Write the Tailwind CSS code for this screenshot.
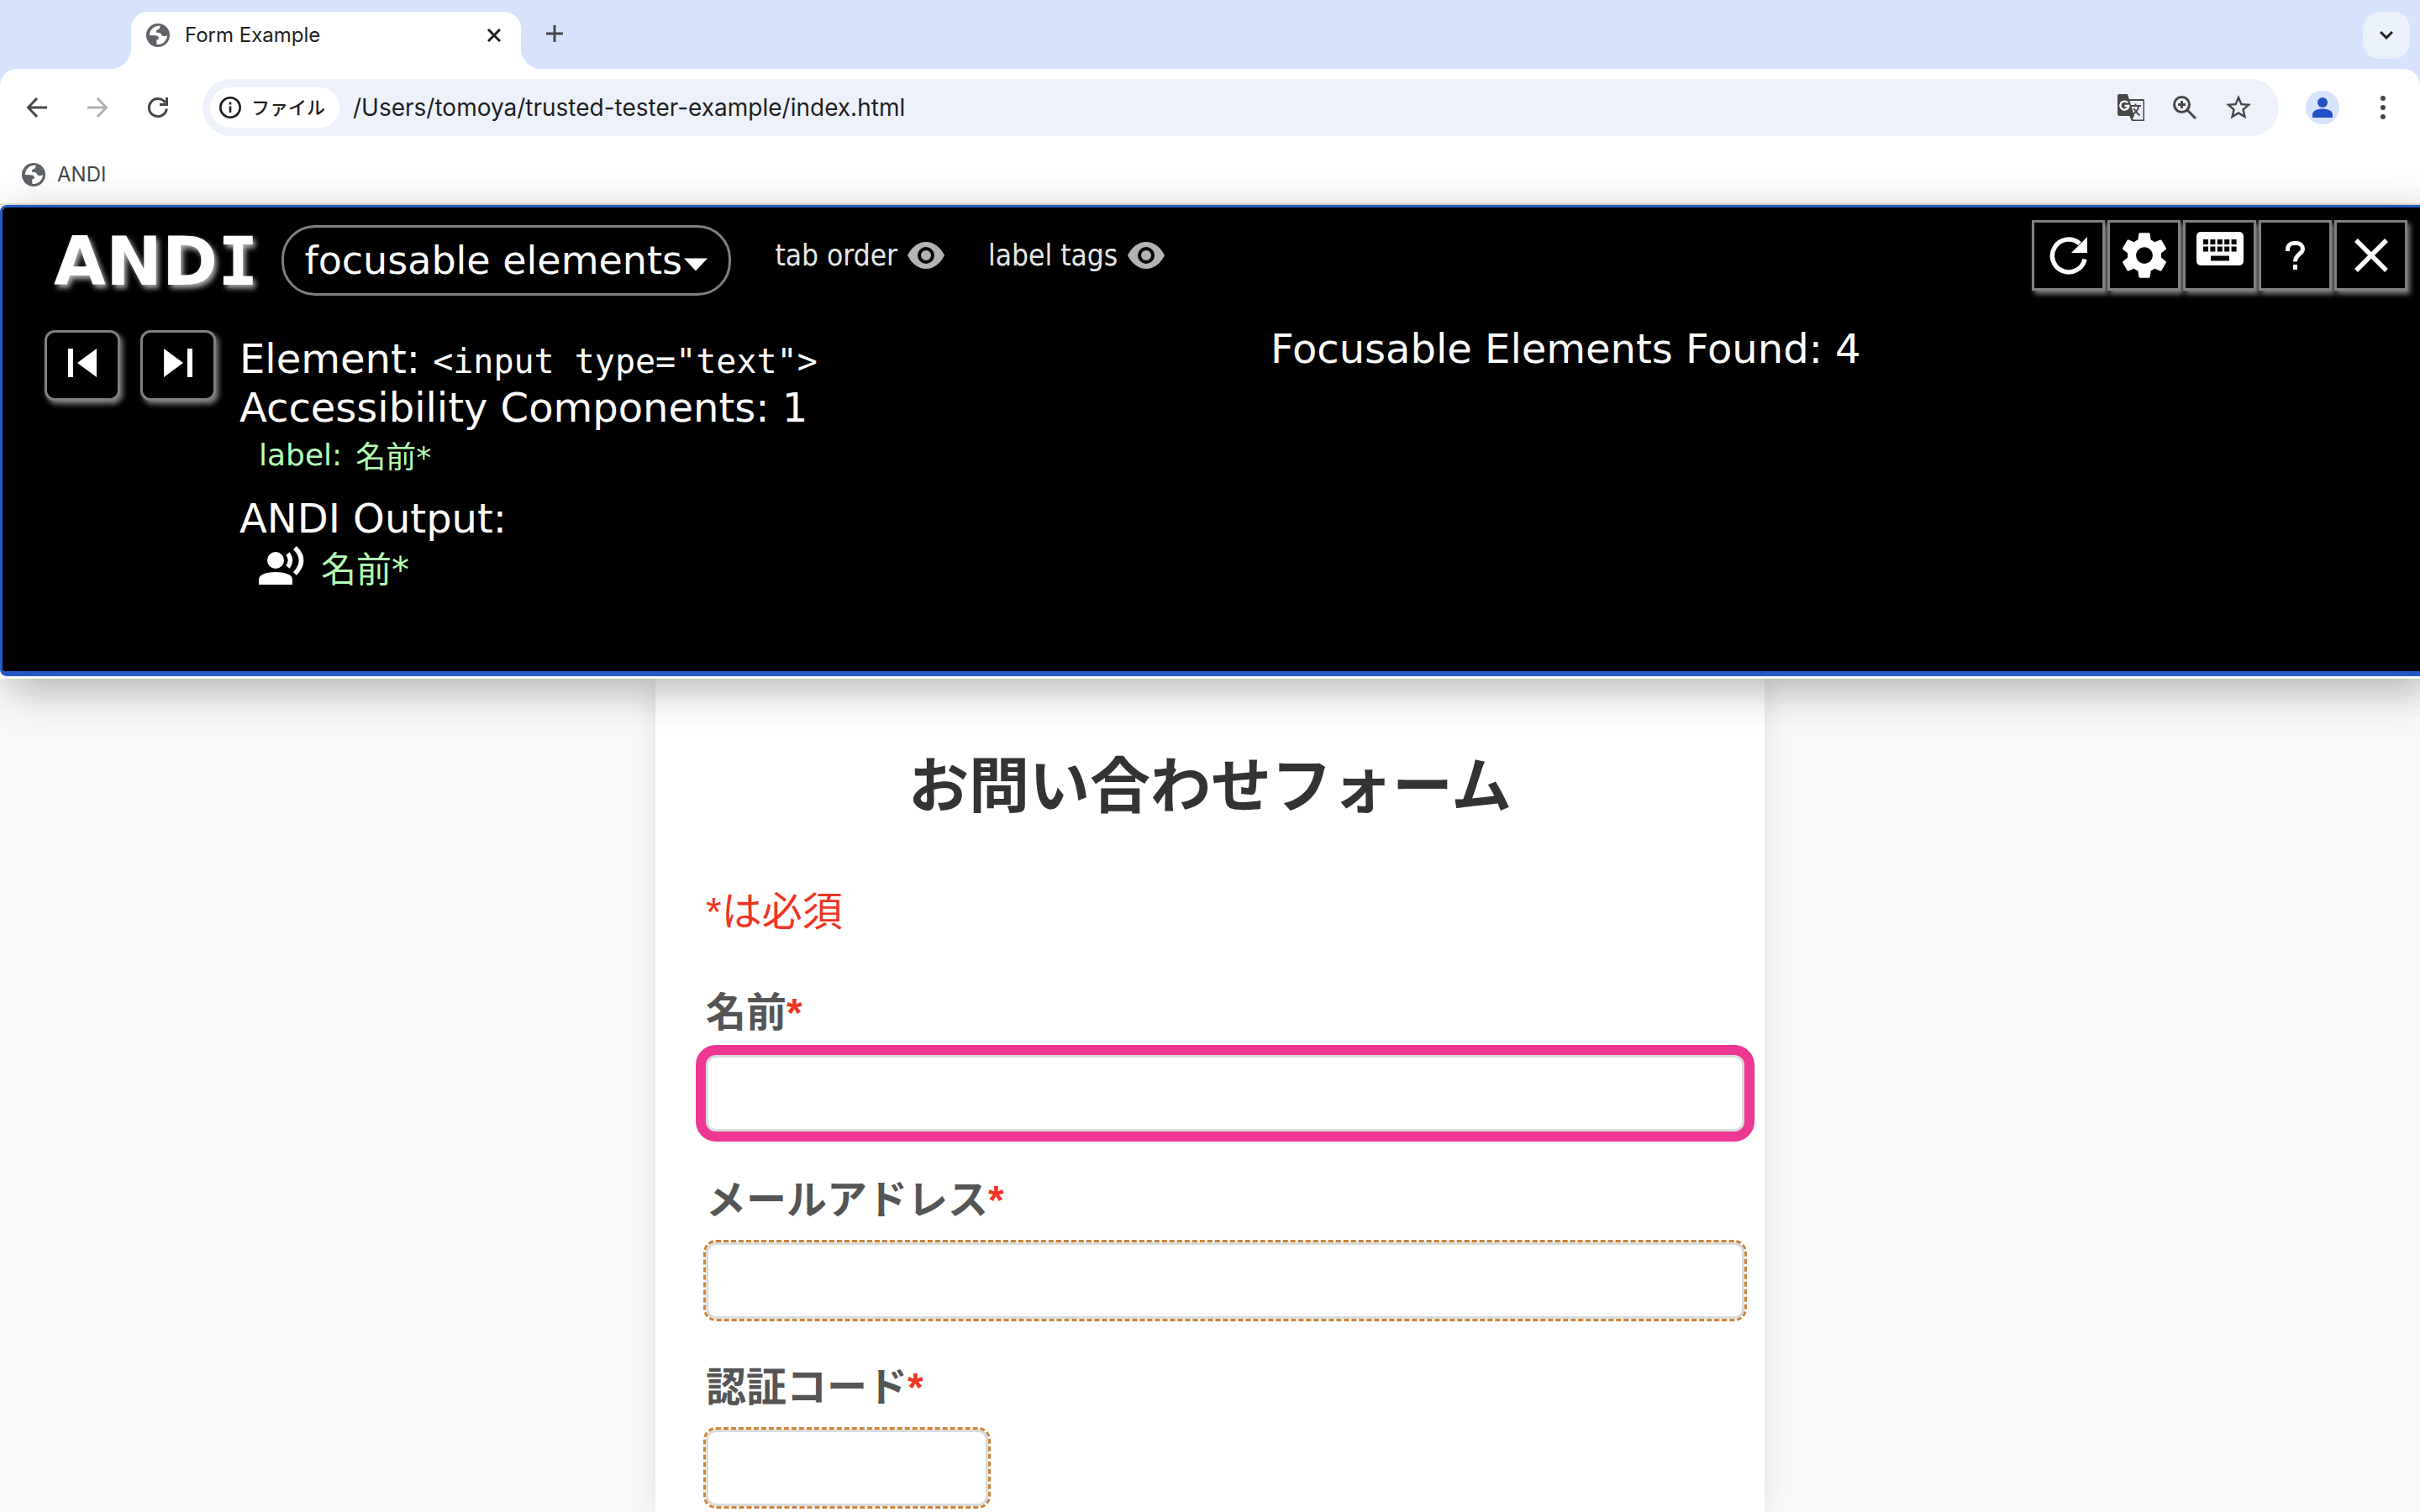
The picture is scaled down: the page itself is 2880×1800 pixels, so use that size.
<!DOCTYPE html>
<html lang="ja">
<head>
    <meta charset="UTF-8">
    <meta name="viewport" content="width=device-width, initial-scale=1.0">
    <title>Form Example</title>
    <script src="https://cdn.jsdelivr.net/npm/@tailwindcss/browser@4"></script>
</head>
<body class="h-screen overflow-hidden flex flex-col bg-[#f8f8f8] font-['Liberation_Sans','Noto_Sans_CJK_JP',sans-serif]">

    <svg class="hidden">
        <symbol id="globe" viewBox="0 0 84 84">
            <circle cx="42" cy="42" r="42" fill="#5f6368"/>
            <path fill="#fff" d="M43 8C26 10 13 22 11 42L32 43C40 43 45 47 45 56L37 58V74C55 78 74 64 75 42C70 47 56 47 54 40C54 34 46 32 36 32C34 26 38 21 46 20C48 16 48 11 52 8Z"/>
        </symbol>
        <symbol id="eye" viewBox="0 0 44 32">
            <path fill="#b3b3b3" d="M0 16C5 6 13 0 22 0s17 6 22 16c-5 10-13 16-22 16S5 26 0 16z"/>
            <circle cx="22" cy="16" r="8" fill="#b3b3b3" stroke="#000" stroke-width="4"/>
        </symbol>
    </svg>

    <!-- Browser window -->
    <div class="shrink-0 bg-[#d7e2fd] font-[Inter,'Noto_Sans_CJK_JP',sans-serif] text-[#1f1f1f]">
        <div class="flex items-center pt-[14px] pl-[156px] pr-3">
            <div class="relative flex items-center w-[464px] h-[68px] pb-3 px-[18px] bg-white rounded-t-[20px]">
                <svg class="absolute -left-6 bottom-0 size-6" viewBox="0 0 24 24"><path fill="#fff" d="M24 0v24H0C13 24 24 13 24 0z"/></svg>
                <svg class="absolute -right-6 bottom-0 size-6" viewBox="0 0 24 24"><path fill="#fff" d="M0 0v24h24C11 24 0 13 0 0z"/></svg>
                <svg class="size-7"><use href="#globe"/></svg>
                <span class="ml-[18px] text-[24px]">Form Example</span>
                <button class="ml-auto size-7 flex items-center justify-center" aria-label="Close tab">
                    <svg class="size-4" viewBox="0 0 16 16" fill="none" stroke="#1f1f1f" stroke-width="3"><path d="M1 1l14 14M15 1L1 15"/></svg>
                </button>
            </div>
            <button class="ml-[26px] mb-4 size-7 flex items-center justify-center" aria-label="New tab">
                <svg class="size-5" viewBox="0 0 20 20" fill="none" stroke="#474747" stroke-width="3"><path d="M10 0v20M0 10h20"/></svg>
            </button>
            <button class="ml-auto mb-3 size-14 rounded-[20px] bg-[#ebf1fb] flex items-center justify-center" aria-label="Search tabs">
                <svg class="w-4 h-[10px]" viewBox="0 0 16 10" fill="none" stroke="#1f1f1f" stroke-width="3"><path d="M1 1l7 7 7-7"/></svg>
            </button>
        </div>

        <div class="bg-white rounded-t-[20px] pt-3 border-b-2 border-[#e8e4d6]">
            <div class="flex items-center px-4">
                <div class="flex gap-4">
                    <button class="size-14 flex items-center justify-center" aria-label="Back">
                        <svg class="size-6" viewBox="0 0 24 24" fill="none" stroke="#474747" stroke-width="3"><path d="M24 12H2M12 1L1.500 12 12 23"/></svg>
                    </button>
                    <button class="size-14 flex items-center justify-center" aria-label="Forward">
                        <svg class="size-6" viewBox="0 0 24 24" fill="none" stroke="#b0b0b0" stroke-width="3"><path d="M0 12h22M12 1l10.500 11L12 23"/></svg>
                    </button>
                    <button class="size-14 flex items-center justify-center" aria-label="Reload">
                        <svg class="size-6" viewBox="0 0 24 24" fill="none" stroke="#474747" stroke-width="3"><path d="M22.300 13.500A10.500 10.500 0 1 1 20.500 6.100"/><path d="M22.500 0v8.500H14"/></svg>
                    </button>
                </div>
                <div class="flex-1 flex items-center ml-[25px] h-[68px] pl-[9px] pr-4 rounded-full bg-[#edf1fa]">
                    <button class="flex items-center gap-3 h-12 pl-[11px] pr-[17px] rounded-full bg-white text-[22px] font-medium">
                        <svg class="size-[26px]" viewBox="0 0 26 26" fill="none" stroke="#1f1f1f" stroke-width="2.600"><circle cx="13" cy="13" r="11.700"/><path d="M13 11.500V19M13 6.500v3"/></svg>
                        ファイル
                    </button>
                    <input type="text" aria-label="Address" value="/Users/tomoya/trusted-tester-example/index.html" class="flex-1 ml-4 bg-transparent text-[28px] outline-none">
                    <button class="w-16 flex justify-center" aria-label="Translate">
                        <svg class="size-8" viewBox="0 0 32 32">
                            <path fill="none" stroke="#474747" stroke-width="2" d="M14 7h16a1.500 1.500 0 0 1 1.500 1.500V30a1.500 1.500 0 0 1-1.500 1.500H18L15 25"/>
                            <path fill="#474747" d="M2 0h10l8 26-3.500 5L15 26H2a2 2 0 0 1-2-2V2a2 2 0 0 1 2-2z"/>
                            <path fill="none" stroke="#fff" stroke-width="2.400" d="M12 10.200A5 5 0 1 0 13.300 14H8.500"/>
                            <path fill="none" stroke="#474747" stroke-width="1.800" d="M16 14h12M21.500 11.500V14M25.500 14c-1 5-4 8-7.500 10.500M19.500 17c2 4 4 6 7 8.500"/>
                        </svg>
                    </button>
                    <button class="w-16 flex justify-center" aria-label="Zoom">
                        <svg class="size-7" viewBox="0 0 28 28" fill="none" stroke="#474747" stroke-width="3"><circle cx="10.500" cy="10.500" r="9"/><path d="M17 17l10 10M10.500 6v9M6 10.500h9"/></svg>
                    </button>
                    <button class="w-16 flex justify-center" aria-label="Bookmark this tab">
                        <svg class="size-9" viewBox="0 0 24 24" fill="#474747"><path d="M22 9.240l-7.190-.62L12 2 9.190 8.630 2 9.240l5.460 4.730L5.820 21 12 17.270 18.180 21l-1.630-7.030L22 9.240zM12 15.400l-3.760 2.270 1-4.280-3.320-2.880 4.380-.38L12 6.100l1.710 4.040 4.380.38-3.320 2.880 1 4.280L12 15.400z"/></svg>
                    </button>
                </div>
                <button class="ml-8 size-10 rounded-full bg-[#d7e2fd] flex items-center justify-center" aria-label="Profile">
                    <svg class="size-6" viewBox="0 0 24 24" fill="#2151c4"><circle cx="12" cy="6" r="6"/><path d="M0 24v-3.500C0 16 6 13.500 12 13.500S24 16 24 20.500V24z"/></svg>
                </button>
                <button class="ml-6 size-14 flex items-center justify-center" aria-label="Menu">
                    <svg class="w-[6px] h-7" viewBox="0 0 6 28" fill="#474747"><circle cx="3" cy="3" r="3"/><circle cx="3" cy="14" r="3"/><circle cx="3" cy="25" r="3"/></svg>
                </button>
            </div>
            <div class="flex items-center h-[68px] mt-3 pl-[26px]">
                <a href="#" class="flex items-center gap-[14px] text-[24px] text-[#474747]">
                    <svg class="size-7"><use href="#globe"/></svg>
                    ANDI
                </a>
            </div>
        </div>
    </div>

    <!-- ANDI bar -->
    <section class="relative z-10 shrink-0 bg-white pb-[3px] shadow-[12px_12px_48px_rgba(0,0,0,0.3)] font-['DejaVu_Sans','Noto_Sans_CJK_JP',sans-serif] text-white">
        <div class="rounded-l-lg border-t-3 border-l-3 border-b-6 border-[#245bc8] bg-black pt-[15px] pb-[93px] pr-[15px]">
            <div class="flex items-start">
                <h1 class="ml-[61px] text-[80px] leading-[100px] font-bold text-shadow-[3px_4px_6px_#b0b0b0]">AND<span class="font-['DejaVu_Sans_Mono']">I</span></h1>
                <div class="relative ml-7 mt-[6px]">
                    <select aria-label="ANDI module" class="appearance-none w-[535px] h-[84px] pl-6 rounded-[40px] border-3 border-[#808080] bg-black text-[46px]">
                        <option>focusable elements</option>
                    </select>
                    <svg class="absolute right-7 top-[39px] w-7 h-4 pointer-events-none" viewBox="0 0 30 16" fill="#fff"><path d="M0 0h30L15 16z"/></svg>
                </div>
                <div class="flex items-center h-[84px] ml-[52px] gap-[52px] text-[35px] text-[#e6e6e6] font-['DejaVu_Sans_Condensed']">
                    <button class="flex items-center gap-3">tab order <svg class="w-11 h-8"><use href="#eye"/></svg></button>
                    <button class="flex items-center gap-3">label tags <svg class="w-11 h-8"><use href="#eye"/></svg></button>
                </div>
                <div class="ml-auto flex gap-[3px]">
                    <button class="w-[87px] h-[84px] flex items-center justify-center border-3 border-[#808080] bg-black shadow-[3px_4px_6px_#808080]" aria-label="Relaunch ANDI">
                        <svg class="size-[46px]" viewBox="0 0 46 46"><path fill="none" stroke="#fff" stroke-width="5.500" d="M42 27.500A19.500 19.500 0 1 1 36 9"/><path fill="#fff" d="M45 1v19H26z"/></svg>
                    </button>
                    <button class="w-[87px] h-[84px] flex items-center justify-center border-3 border-[#808080] bg-black shadow-[3px_4px_6px_#808080]" aria-label="ANDI settings">
                        <svg class="size-16" viewBox="0 0 24 24" fill="#fff"><path d="M19.430 12.980c.04-.32.07-.64.07-.98s-.03-.66-.07-.98l2.110-1.650c.19-.15.24-.42.12-.64l-2-3.460c-.12-.22-.39-.3-.61-.22l-2.490 1c-.52-.4-1.080-.73-1.690-.98l-.38-2.650C14.460 2.180 14.250 2 14 2h-4c-.25 0-.46.18-.49.42l-.38 2.650c-.61.25-1.170.59-1.690.98l-2.490-1c-.23-.09-.49 0-.61.22l-2 3.460c-.13.22-.07.49.12.64l2.110 1.650c-.04.32-.07.65-.07.98s.03.66.07.98l-2.110 1.650c-.19.15-.24.42-.12.64l2 3.460c.12.22.39.3.61.22l2.490-1c.52.4 1.080.73 1.690.98l.38 2.650c.03.24.24.42.49.42h4c.25 0 .46-.18.49-.42l.38-2.650c.61-.25 1.170-.59 1.690-.98l2.490 1c.23.09.49 0 .61-.22l2-3.460c.12-.22.07-.49-.12-.64l-2.110-1.650zM12 15.700c-2.040 0-3.700-1.660-3.700-3.700s1.660-3.700 3.700-3.700 3.700 1.660 3.700 3.700-1.660 3.700-3.700 3.700z"/></svg>
                    </button>
                    <button class="w-[87px] h-[84px] pb-4 flex items-center justify-center border-3 border-[#808080] bg-black shadow-[3px_4px_6px_#808080]" aria-label="Keyboard shortcuts">
                        <svg class="w-14 h-10" viewBox="0 0 56 40"><rect width="56" height="40" rx="5" fill="#fff"/><path stroke="#000" stroke-width="6" stroke-dasharray="6 2.400" d="M8 12h40M8 20.500h40"/><path stroke="#000" stroke-width="6" d="M17 31.500h22"/></svg>
                    </button>
                    <button class="w-[87px] h-[84px] flex items-center justify-center border-3 border-[#808080] bg-black shadow-[3px_4px_6px_#808080]" aria-label="ANDI help">
                        <svg class="w-6 h-[34px]" viewBox="0 0 24 34" fill="none" stroke="#fff" stroke-width="5"><path d="M2.500 12V9.500A7 7 0 0 1 9.500 2.500h4A7 7 0 0 1 20.500 9.500C20.500 15 11.500 16 11.500 24.500M11.500 28v6"/></svg>
                    </button>
                    <button class="w-[87px] h-[84px] flex items-center justify-center border-3 border-[#808080] bg-black shadow-[3px_4px_6px_#808080]" aria-label="Remove ANDI">
                        <svg class="size-10" viewBox="0 0 40 40" fill="none" stroke="#fff" stroke-width="5.500"><path d="M2 2l36 36M38 2L2 38"/></svg>
                    </button>
                </div>
            </div>

            <div class="flex items-start mt-6">
                <div class="w-1/2 flex items-start pl-[50px]">
                    <button class="w-[90px] h-[84px] mt-[7px] pb-[6px] flex items-center justify-center rounded-[12px] border-3 border-[#808080] bg-black shadow-[3px_4px_6px_#808080]" aria-label="Previous element">
                        <svg class="size-[34px]" viewBox="0 0 34 34" fill="#fff"><path d="M0 0h6v34H0zM34 0v34L11 17z"/></svg>
                    </button>
                    <button class="w-[90px] h-[84px] mt-[7px] ml-6 pb-[6px] flex items-center justify-center rounded-[12px] border-3 border-[#808080] bg-black shadow-[3px_4px_6px_#808080]" aria-label="Next element">
                        <svg class="size-[34px]" viewBox="0 0 34 34" fill="#fff"><path d="M28 0h6v34h-6zM0 0v34l23-17z"/></svg>
                    </button>
                    <div class="ml-7 mt-3 text-[48px] leading-[58px]">
                        <h2>Element: <code class="font-['DejaVu_Sans_Mono'] text-[40px] leading-none">&lt;input type="text"&gt;</code></h2>
                        <h2>Accessibility Components: 1</h2>
                        <p class="ml-[23px] flex gap-4 text-[36px] leading-[56px] text-[#b4ffb4]"><span>label:</span><span class="pt-[3px] -mb-[3px]">名前*</span></p>
                        <h2 class="mt-[18px]">ANDI Output:</h2>
                        <p class="ml-[23px] flex gap-5 text-[42px] leading-[60px] text-[#b4ffb4]">
                            <svg class="w-[54px] h-[46px] mt-1" viewBox="0 0 54 46" fill="#fff"><circle cx="20" cy="17" r="10"/><path d="M0 46v-6c0-6 9-9 20-9s20 3 20 9v6z"/><path fill="none" stroke="#fff" stroke-width="5.500" d="M34.500 9q6 8 0 16M43 2q15 15 0 31"/></svg>
                            <span class="pt-[3px] -mb-[3px]">名前*</span>
                        </p>
                    </div>
                </div>
                <p class="w-1/2 pl-[78px] text-[48px] leading-[58px]">Focusable Elements Found: 4</p>
            </div>
        </div>
    </section>

    <!-- Contact form -->
    <main class="flex-1 min-h-0">
        <form class="w-[1320px] h-full mx-auto px-[60px] pt-20 bg-white shadow-[0_0_30px_rgba(0,0,0,0.1)] text-[48px] leading-[60px]">
            <h1 class="text-center text-[72px] leading-24 font-bold text-[#333]">お問い合わせフォーム</h1>
            <p class="mt-18 text-[#ee3524]">*は必須</p>

            <label for="name" class="block mt-15 font-bold text-[#555]">名前<span class="text-[#ee3524]">*</span></label>
            <input id="name" type="text" required class="block w-[calc(100%+36px)] h-[91px] mt-5 rounded-[12px] border-3 border-[#d8dedc] outline-12 outline-[#ed3793]">

            <label for="email" class="block mt-[52px] font-bold text-[#555]">メールアドレス<span class="text-[#ee3524]">*</span></label>
            <input id="email" type="email" required class="block w-[calc(100%+36px)] h-[91px] mt-5 rounded-[12px] border-3 border-[#dadcdc] outline-3 outline-dashed outline-[#cd8536]">

            <label for="code" class="block mt-[52px] font-bold text-[#555]">認証コード<span class="text-[#ee3524]">*</span></label>
            <input id="code" type="text" required class="block w-[336px] h-[91px] mt-5 rounded-[12px] border-3 border-[#dadcdc] outline-3 outline-dashed outline-[#cd8536]">
        </form>
    </main>

</body>
</html>
